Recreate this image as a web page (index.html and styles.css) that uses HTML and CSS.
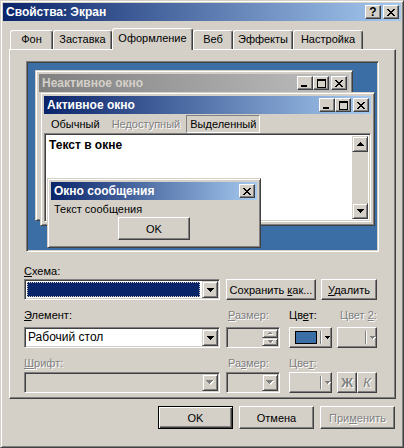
FILE: index.html
```html
<!DOCTYPE html>
<html lang="ru">
<head>
    <meta charset="UTF-8">
    <title>Свойства: Экран</title>
    <link rel="stylesheet" href="styles.css">
</head>
<body>
<div class="dialog">
    <div class="titlebar">
        <span class="caption">Свойства: Экран</span>
        <div class="caption-btns">
            <span class="cbtn help">?</span>
            <span class="cbtn sep">
                <svg width="8" height="7" viewBox="0 0 8 7"><path d="M0 0h2v1H0zM6 0h2v1H6zM1 1h2v1H1zM5 1h2v1H5zM2 2h4v1H2zM3 3h2v1H3zM2 4h4v1H2zM1 5h2v1H1zM5 5h2v1H5zM0 6h2v1H0zM6 6h2v1H6z"/></svg>
            </span>
        </div>
    </div>

    <div class="tabs">
        <div class="tab tab-bg">Фон</div>
        <div class="tab tab-ss">Заставка</div>
        <div class="tab tab-look selected">Оформление</div>
        <div class="tab tab-web">Веб</div>
        <div class="tab tab-fx">Эффекты</div>
        <div class="tab tab-set">Настройка</div>
    </div>

    <div class="panel">
        <div class="preview">
            <!-- inactive window -->
            <div class="pwin inactive-win">
                <div class="ptitle inactive">
                    <span>Неактивное окно</span>
                    <div class="caption-btns">
                        <span class="cbtn min"><svg width="6" height="2"><rect width="6" height="2"/></svg></span>
                        <span class="cbtn"><svg width="9" height="9" viewBox="0 0 9 9"><path fill-rule="evenodd" d="M0 0h9v9H0zM1 2v6h7V2z"/></svg></span>
                        <span class="cbtn sep"><svg width="8" height="7" viewBox="0 0 8 7"><path d="M0 0h2v1H0zM6 0h2v1H6zM1 1h2v1H1zM5 1h2v1H5zM2 2h4v1H2zM3 3h2v1H3zM2 4h4v1H2zM1 5h2v1H1zM5 5h2v1H5zM0 6h2v1H0zM6 6h2v1H6z"/></svg></span>
                    </div>
                </div>
            </div>

            <!-- active window -->
            <div class="pwin active-win">
                <div class="ptitle">
                    <span>Активное окно</span>
                    <div class="caption-btns">
                        <span class="cbtn min"><svg width="6" height="2"><rect width="6" height="2"/></svg></span>
                        <span class="cbtn"><svg width="9" height="9" viewBox="0 0 9 9"><path fill-rule="evenodd" d="M0 0h9v9H0zM1 2v6h7V2z"/></svg></span>
                        <span class="cbtn sep"><svg width="8" height="7" viewBox="0 0 8 7"><path d="M0 0h2v1H0zM6 0h2v1H6zM1 1h2v1H1zM5 1h2v1H5zM2 2h4v1H2zM3 3h2v1H3zM2 4h4v1H2zM1 5h2v1H1zM5 5h2v1H5zM0 6h2v1H0zM6 6h2v1H6z"/></svg></span>
                    </div>
                </div>
                <div class="menubar">
                    <span class="menu-item">Обычный</span>
                    <span class="menu-item disabled">Недоступный</span>
                    <span class="menu-item selected">Выделенный</span>
                </div>
                <div class="textarea">
                    <div class="text-body">Текст в окне</div>
                    <div class="scrollbar">
                        <span class="sbtn"><svg width="7" height="4" viewBox="0 0 7 4"><path d="M3 0h1v1h1v1h1v1h1v1H0V3h1V2h1V1h1z"/></svg></span>
                        <span class="track"></span>
                        <span class="sbtn"><svg width="7" height="4" viewBox="0 0 7 4"><path d="M0 0h7v1H6v1H5v1H4v1H3V3H2V2H1V1H0z"/></svg></span>
                    </div>
                </div>
            </div>

            <!-- message box -->
            <div class="pwin msg-win">
                <div class="ptitle">
                    <span>Окно сообщения</span>
                    <div class="caption-btns">
                        <span class="cbtn"><svg width="8" height="7" viewBox="0 0 8 7"><path d="M0 0h2v1H0zM6 0h2v1H6zM1 1h2v1H1zM5 1h2v1H5zM2 2h4v1H2zM3 3h2v1H3zM2 4h4v1H2zM1 5h2v1H1zM5 5h2v1H5zM0 6h2v1H0zM6 6h2v1H6z"/></svg></span>
                    </div>
                </div>
                <div class="msg-text">Текст сообщения</div>
                <div class="msg-actions"><span class="btn msg-ok">OK</span></div>
            </div>
        </div>

        <div class="settings">
            <div class="label"><u>С</u>хема:</div>
            <div class="row row-1">
                <div class="combo col-1">
                    <div class="combo-sel"></div>
                    <span class="drop"><svg width="7" height="4" viewBox="0 0 7 4"><path d="M0 0h7v1H6v1H5v1H4v1H3V3H2V2H1V1H0z"/></svg></span>
                </div>
                <span class="btn save-btn"><span>Сохранить <u>к</u>ак...</span></span>
                <span class="btn del-btn"><span><u>У</u>далить</span></span>
            </div>

            <div class="row labels labels-2">
                <div class="col-1"><u>Э</u>лемент:</div>
                <div class="col-2 disabled"><u>Р</u>азмер:</div>
                <div class="col-3">Цв<u>е</u>т:</div>
                <div class="col-4 disabled">Цвет <u>2</u>:</div>
            </div>
            <div class="row row-2">
                <div class="combo col-1">
                    <div class="combo-text">Рабочий стол</div>
                    <span class="drop"><svg width="7" height="4" viewBox="0 0 7 4"><path d="M0 0h7v1H6v1H5v1H4v1H3V3H2V2H1V1H0z"/></svg></span>
                </div>
                <div class="combo off col-2">
                    <div class="combo-text"></div>
                    <div class="spin">
                        <span class="spin-btn"><svg width="5" height="3" viewBox="0 0 5 3"><path class="sh" d="M3 1h1v1h1v1H1V2h1z"/><path d="M2 0h1v1h1v1H0V1h1z"/></svg></span>
                        <span class="spin-btn"><svg width="5" height="3" viewBox="0 0 5 3"><path class="sh" d="M1 1h5v1H5v1H4V2H3z" /><path d="M0 0h5v1H4v1H3v1H2V2H1V1H0z"/></svg></span>
                    </div>
                </div>
                <span class="btn color-btn col-3">
                    <span class="swatch"></span>
                    <span class="vsep"></span>
                    <svg width="5" height="3" viewBox="0 0 5 3"><path d="M0 0h5v1H4v1H3v1H2V2H1V1H0z"/></svg>
                </span>
                <span class="btn color-btn col-4 off">
                    <span class="swatch-empty"></span>
                    <span class="vsep"></span>
                    <svg width="6" height="4" viewBox="0 0 6 4"><path class="sh" d="M1 1h5v1H5v1H4v1H3V3H2V2H1z"/><path d="M0 0h5v1H4v1H3v1H2V2H1V1H0z"/></svg>
                </span>
            </div>

            <div class="row labels labels-3">
                <div class="col-1 disabled"><u>Ш</u>рифт:</div>
                <div class="col-2 disabled">Ра<u>з</u>мер:</div>
                <div class="col-3 disabled">Цве<u>т</u>:</div>
            </div>
            <div class="row row-3">
                <div class="combo off col-1">
                    <div class="combo-text"></div>
                    <span class="drop"><svg width="8" height="5" viewBox="0 0 8 5"><path class="sh" d="M1 1h7v1H7v1H6v1H5v1H4V4H3V3H2V2H1z"/><path d="M0 0h7v1H6v1H5v1H4v1H3V3H2V2H1V1H0z"/></svg></span>
                </div>
                <div class="combo off col-2">
                    <div class="combo-text"></div>
                    <span class="drop"><svg width="8" height="5" viewBox="0 0 8 5"><path class="sh" d="M1 1h7v1H7v1H6v1H5v1H4V4H3V3H2V2H1z"/><path d="M0 0h7v1H6v1H5v1H4v1H3V3H2V2H1V1H0z"/></svg></span>
                </div>
                <span class="btn color-btn col-3 off">
                    <span class="swatch-empty"></span>
                    <span class="vsep"></span>
                    <svg width="6" height="4" viewBox="0 0 6 4"><path class="sh" d="M1 1h5v1H5v1H4v1H3V3H2V2H1z"/><path d="M0 0h5v1H4v1H3v1H2V2H1V1H0z"/></svg>
                </span>
                <span class="btn style-btn bold-btn off">Ж</span>
                <span class="btn style-btn italic-btn off">К</span>
            </div>
        </div>
    </div>

    <div class="footer">
        <span class="btn dlg-btn default">OK</span>
        <span class="btn dlg-btn">Отмена</span>
        <span class="btn dlg-btn off"><span>При<u>м</u>енить</span></span>
    </div>
</div>
</body>
</html>
```

FILE: styles.css
```css
/* Windows 2000 classic look */
body {
    margin: 0;
    font-family: "Liberation Sans", Arial, sans-serif;
    font-size: 11px;
    color: #000;
    background: #d4d0c8;
}

u {
    text-decoration: underline;
    text-underline-offset: 1px;
}

.dialog {
    width: 404px;
    height: 448px;
    box-sizing: border-box;
    background: #d4d0c8;
    border: 1px solid;
    border-color: #d4d0c8 #404040 #404040 #d4d0c8;
    box-shadow: inset 1px 1px #fff, inset -1px -1px #808080;
    padding: 2px;
}

/* title bars */
.titlebar,
.ptitle {
    height: 18px;
    display: flex;
    align-items: center;
    justify-content: space-between;
    padding: 0 2px 0 3px;
    background: linear-gradient(to right, #0a246a, #a6caf0);
    color: #fff;
    font-weight: bold;
    font-size: 12px;
}

.ptitle.inactive {
    background: linear-gradient(to right, #808080, #c0c0c0);
    color: #d4d0c8;
}

.caption-btns {
    display: flex;
}

.cbtn {
    width: 16px;
    height: 14px;
    box-sizing: border-box;
    background: #d4d0c8;
    border: 1px solid;
    border-color: #fff #404040 #404040 #fff;
    box-shadow: inset -1px -1px #808080;
    display: flex;
    align-items: center;
    justify-content: center;
    color: #000;
    font-size: 12px;
    line-height: 1;
}

.cbtn.min {
    align-items: flex-end;
    padding-bottom: 2px;
    padding-right: 2px;
}

.cbtn.sep {
    margin-left: 2px;
}

.cbtn.help {
    font-weight: bold;
}

/* tabs */
.tabs {
    display: flex;
    align-items: flex-end;
    height: 21px;
    margin: 7px 0 0 7px;
}

.tab {
    height: 19px;
    box-sizing: border-box;
    border: 1px solid;
    border-bottom: none;
    border-color: #fff #404040 transparent #fff;
    border-radius: 3px 3px 0 0;
    box-shadow: inset -1px 0 #808080;
    text-align: center;
    line-height: 17px;
    background: #d4d0c8;
}

.tab.selected {
    height: 22px;
    margin-bottom: -1px;
    position: relative;
    z-index: 1;
    line-height: 18px;
}

.tab-bg { width: 43px; }
.tab-ss { width: 59px; }
.tab-look { width: 81px; }
.tab-web { width: 40px; }
.tab-fx { width: 60px; }
.tab-set { width: 70px; }

.panel {
    margin-left: 6px;
    width: 387px;
    height: 350px;
    box-sizing: border-box;
    border: 1px solid;
    border-color: #fff #404040 #404040 #fff;
    box-shadow: inset -1px -1px #808080;
}

/* preview */
.preview {
    position: relative;
    margin: 11px 0 0 16px;
    width: 353px;
    height: 191px;
    box-sizing: border-box;
    border: 1px solid;
    border-color: #808080 #fff #fff #808080;
    box-shadow: inset 1px 1px #404040, inset -1px -1px #d4d0c8;
    background: #3a6ea5;
}

.pwin {
    position: absolute;
    box-sizing: border-box;
    background: #d4d0c8;
    border: 1px solid;
    border-color: #d4d0c8 #404040 #404040 #d4d0c8;
    box-shadow: inset 1px 1px #fff, inset -1px -1px #808080;
    padding: 3px;
    display: flex;
    flex-direction: column;
}

.inactive-win {
    left: 8px;
    top: 8px;
    width: 318px;
    height: 151px;
}

.active-win {
    left: 13px;
    top: 30px;
    width: 335px;
    height: 134px;
}

.msg-win {
    left: 20px;
    top: 116px;
    width: 214px;
    height: 70px;
}

.menubar {
    height: 19px;
    display: flex;
    align-items: center;
    padding-left: 1px;
}

.menu-item {
    padding: 0 6px;
    line-height: 16px;
}

.menu-item.disabled {
    color: #808080;
    text-shadow: 1px 1px #fff;
}

.menu-item.selected {
    border: 1px solid;
    border-color: #808080 #fff #fff #808080;
    padding: 0 3px;
}

.textarea {
    flex: 1;
    display: flex;
    background: #fff;
    border: 1px solid;
    border-color: #808080 #fff #fff #808080;
    box-shadow: inset 1px 1px #404040, inset -1px -1px #d4d0c8;
    padding: 2px;
}

.text-body {
    flex: 1;
    font-weight: bold;
    font-size: 12px;
    padding: 2px 2px;
}

.scrollbar {
    width: 16px;
    display: flex;
    flex-direction: column;
    background: #d4d0c8;
}

.track {
    flex: 1;
}

.sbtn {
    width: 16px;
    height: 16px;
    box-sizing: border-box;
    border: 1px solid;
    border-color: #d4d0c8 #404040 #404040 #d4d0c8;
    box-shadow: inset 1px 1px #fff, inset -1px -1px #808080;
    display: flex;
    align-items: center;
    justify-content: center;
}

.msg-text {
    padding: 3px 3px 0;
    line-height: 13px;
}

.msg-actions {
    display: flex;
    justify-content: center;
    margin-top: 1px;
}

/* buttons */
.btn {
    box-sizing: border-box;
    background: #d4d0c8;
    border: 1px solid;
    border-color: #fff #404040 #404040 #fff;
    box-shadow: inset -1px -1px #808080;
    display: flex;
    align-items: center;
    justify-content: center;
    white-space: nowrap;
}

.msg-ok {
    width: 72px;
    height: 23px;
}

.off {
    color: #808080;
    text-shadow: 1px 1px #fff;
}

.off svg path {
    fill: #808080;
}

.off svg path.sh {
    fill: #fff;
}

/* settings area */
.settings {
    padding-left: 14px;
}

.label {
    margin-top: 13px;
    line-height: 13px;
}

.row {
    display: flex;
}

.row-1 {
    margin-top: 1px;
    height: 21px;
}

.labels {
    line-height: 13px;
}

.labels-2 { margin-top: 9px; }
.labels-3 { margin-top: 9px; }

.row-2 {
    margin-top: 5px;
    height: 21px;
}

.row-3 {
    margin-top: 2px;
    height: 21px;
}

.disabled {
    color: #808080;
    text-shadow: 1px 1px #fff;
}

.col-1 { width: 196px; }
.col-2 { width: 54px; margin-left: 6px; }
.col-3 { width: 43px; margin-left: 9px; }
.col-4 { width: 40px; margin-left: 5px; }

.labels .col-2 { padding-left: 2px; box-sizing: border-box; }
.labels .col-4 { padding-left: 3px; box-sizing: border-box; }

.combo {
    height: 21px;
    box-sizing: border-box;
    border: 1px solid;
    border-color: #808080 #fff #fff #808080;
    box-shadow: inset 1px 1px #404040, inset -1px -1px #d4d0c8;
    padding: 1px;
    background: #fff;
    display: flex;
}

.combo.off {
    background: #d4d0c8;
}

.combo-sel {
    flex: 1;
    margin: 1px 2px 1px 1px;
    background: #0a246a;
    outline: 1px dotted #d4d0c8;
    outline-offset: -1px;
}

.combo-text {
    flex: 1;
    padding-left: 2px;
    line-height: 17px;
    font-size: 12px;
}

.drop {
    width: 16px;
    box-sizing: border-box;
    border: 1px solid;
    border-color: #d4d0c8 #404040 #404040 #d4d0c8;
    box-shadow: inset 1px 1px #fff, inset -1px -1px #808080;
    background: #d4d0c8;
    display: flex;
    align-items: center;
    justify-content: center;
}

.spin {
    width: 16px;
    display: flex;
    flex-direction: column;
}

.spin-btn {
    flex: 1;
    box-sizing: border-box;
    border: 1px solid;
    border-color: #d4d0c8 #404040 #404040 #d4d0c8;
    box-shadow: inset 1px 1px #fff, inset -1px -1px #808080;
    background: #d4d0c8;
    display: flex;
    align-items: center;
    justify-content: center;
}

.save-btn {
    width: 90px;
    margin-left: 6px;
    font-size: 11px;
}

.del-btn {
    width: 56px;
    margin-left: 5px;
    font-size: 11px;
}

.color-btn {
    justify-content: flex-start;
    padding-left: 5px;
}

.swatch {
    width: 22px;
    height: 13px;
    box-sizing: border-box;
    border: 1px solid #000;
    background: #3a6ea5;
}

.swatch-empty {
    width: 22px;
    height: 13px;
}

.col-4 .swatch-empty {
    width: 19px;
}

.vsep {
    width: 1px;
    height: 13px;
    background: #808080;
    border-right: 1px solid #fff;
    margin: 0 3px 0 3px;
}

.style-btn {
    width: 20px;
    margin-left: 0;
    font-size: 13px;
}

.bold-btn {
    margin-left: 5px;
    font-weight: bold;
}

.italic-btn {
    font-style: italic;
}

/* dialog buttons */
.footer {
    display: flex;
    justify-content: flex-end;
    gap: 6px;
    margin-top: 7px;
    padding-right: 6px;
}

.dlg-btn {
    width: 75px;
    height: 23px;
    font-size: 11px;
}

.dlg-btn.default {
    border-color: #000;
    box-shadow: inset 1px 1px #fff, inset -1px -1px #404040, inset -2px -2px #808080;
}
```
